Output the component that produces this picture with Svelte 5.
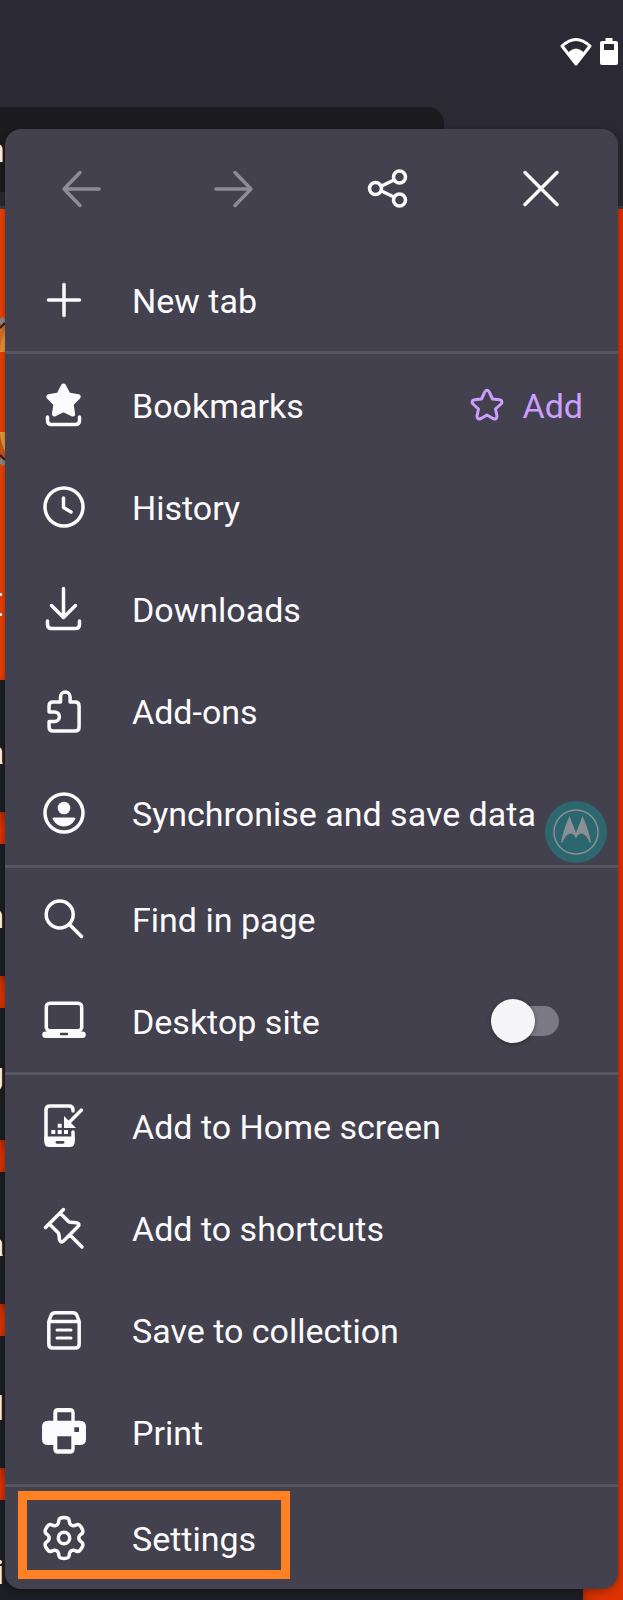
<script lang="ts">
  type Item = { icon: string; label: string; extra?: 'add' | 'switch'; highlight?: boolean };

  const sections: Item[][] = [
    [{ icon: 'plus', label: 'New tab' }],
    [
      { icon: 'bookmarks', label: 'Bookmarks', extra: 'add' },
      { icon: 'history', label: 'History' },
      { icon: 'downloads', label: 'Downloads' },
      { icon: 'addons', label: 'Add-ons' },
      { icon: 'account', label: 'Synchronise and save data' }
    ],
    [
      { icon: 'find', label: 'Find in page' },
      { icon: 'desktop', label: 'Desktop site', extra: 'switch' }
    ],
    [
      { icon: 'home', label: 'Add to Home screen' },
      { icon: 'pin', label: 'Add to shortcuts' },
      { icon: 'collection', label: 'Save to collection' },
      { icon: 'print', label: 'Print' }
    ],
    [{ icon: 'settings', label: 'Settings', highlight: true }]
  ];

  // what is left of the page's list behind the menu
  const cards = ['a', 'n', 'U', 'a', 'l', 'ri'];

  let desktopSite = $state(false);

  // closed curve through the midpoints of the given points
  function smooth(points: number[][]) {
    const mid = (a: number[], b: number[]) =>
      `${((a[0] + b[0]) / 2).toFixed(1)} ${((a[1] + b[1]) / 2).toFixed(1)}`;
    let d = `M${mid(points[points.length - 1], points[0])}`;
    points.forEach((p, i) => {
      const next = points[(i + 1) % points.length];
      d += `Q${p[0].toFixed(1)} ${p[1].toFixed(1)} ${mid(p, next)}`;
    });
    return d + 'z';
  }

  function gear(cx: number, cy: number) {
    const points: number[][] = [];
    for (let i = 0; i < 6; i++) {
      for (const [deg, r] of [[-21, 15], [-14, 21], [14, 21], [21, 15]]) {
        const a = ((i * 60 + deg - 90) * Math.PI) / 180;
        points.push([cx + r * Math.cos(a), cy + r * Math.sin(a)]);
      }
    }
    return smooth(points);
  }

  function star(cx: number, cy: number, outer: number, inner: number) {
    let d = '';
    for (let i = 0; i < 10; i++) {
      const r = i % 2 ? inner : outer;
      const a = ((i * 36 - 90) * Math.PI) / 180;
      d += `${i ? 'L' : 'M'}${(cx + r * Math.cos(a)).toFixed(1)} ${(cy + r * Math.sin(a)).toFixed(1)}`;
    }
    return d + 'z';
  }
</script>

{#snippet glyph(name: string)}
  <svg class="icon" viewBox="0 0 52 52" aria-hidden="true">
    {#if name === 'plus'}
      <path d="M26 10.500v31M10.500 26h31" />
    {:else if name === 'bookmarks'}
      <path d={star(25.5, 22.5, 15.5, 8)} class="solid" stroke-width="5" />
      <path d="M9.500 38v3.500q0 4 4 4h24q4 0 4-4v-3.500" />
    {:else if name === 'history'}
      <circle cx="26" cy="26" r="19" />
      <path d="M25.500 17v9.500l7.500 4.500" />
    {:else if name === 'downloads'}
      <path d="M25.500 5.500v29M13.500 22.500l12 12 12-12" />
      <path d="M9.500 38v3.500q0 4 4 4h24q4 0 4-4v-3.500" />
    {:else if name === 'addons'}
      <path d="M11 21q0-4 4-4h7.500v-5a4.800 5 0 0 1 9.600 0v5h5q4 0 4 4v21q0 4-4 4h-22q-4 0-4-4v-5.500h5.500a4.800 4.800 0 0 0 0-9.600h-5.500z" />
    {:else if name === 'account'}
      <circle cx="26" cy="26" r="19" />
      <circle cx="26" cy="21" r="6.300" class="fill" />
      <path d="M16.500 30.500h19q3 0 1.500 2.300-4 6.700-11 6.700t-11-6.700q-1.500-2.300 1.500-2.300z" class="fill" />
    {:else if name === 'find'}
      <circle cx="21.700" cy="21.500" r="13.500" />
      <path d="M31.500 31.500l12 12" />
    {:else if name === 'desktop'}
      <rect x="8.300" y="8.300" width="35.400" height="27.400" rx="3.500" />
      <path d="M7.500 36.500h37a3.200 3.200 0 0 1 0 6.500h-37a3.200 3.200 0 0 1 0-6.500z" class="fill" />
      <path d="M23 39h6" class="cut" stroke-width="2.500" />
    {:else if name === 'home'}
      <path d="M35 11v-1q0-4-4-4h-19q-4 0-4 4v30h27v-8" />
      <path d="M6.300 36.500h30.400v5.500q0 5-5 5h-20.400q-5 0-5-5z" class="fill" />
      <path d="M19 42.300h6" class="cut" stroke-width="2.800" />
      <path d="M19.700 23.700h4v4h-4zM13.300 30h4v4h-4zM19.700 30h4v4h-4zM26 30h4v4h-4z" class="fill" />
      <path d="M43.500 10l-13 13" />
      <path d="M26 16v12h12z" class="fill" />
    {:else if name === 'pin'}
      <path d="M25.500 7.500l-18 18M22.500 11.500l8 8q.8.800 2 .800l6 .4q4 .8 1.500 3.800l-14.500 14.500q-3 2.500-4-1.500l-.6-5q-.2-1.200-1-2l-8-8M32.500 33.500l11.500 11.500" />
    {:else if name === 'collection'}
      <path d="M10.800 17.500l2-5.500q1-3.200 4.500-3.200h17.400q3.500 0 4.500 3.200l2 5.500v22.500q0 4-4 4h-22.400q-4 0-4-4zM11 17.500h30" />
      <path d="M19 26h14M19 34h14" stroke-width="3" />
    {:else if name === 'print'}
      <path fill-rule="evenodd" class="fill" d="M20 2h12q4.700 0 4.700 4.700v8h5.300q6 0 6 6v12.300q0 6-6 6h-5.300v4q0 4.700-4.700 4.700h-12q-4.700 0-4.700-4.700v-4h-5.300q-6 0-6-6v-12.300q0-6 6-6h5.300v-8q0-4.700 4.700-4.700zM19.300 6.300v8.500h14v-8.500zM19.300 30.300v13h14v-13zM36.300 21.300v4.700h4.700v-4.700z" />
    {:else if name === 'settings'}
      <path d={gear(26, 26)} />
      <circle cx="26" cy="26" r="5.700" />
    {:else if name === 'back'}
      <path d="M24 9.500l-16 16.500 16 16.500M8 26h35" />
    {:else if name === 'forward'}
      <path d="M26 9.500l16 16.500-16 16.500M42 26h-35" />
    {:else if name === 'share'}
      <circle cx="13.500" cy="25.500" r="6" />
      <circle cx="37.500" cy="14" r="6" />
      <circle cx="37.500" cy="37" r="6" />
      <path d="M19.500 23l12.500-6M19.500 28l12.500 6" />
    {:else if name === 'close'}
      <path d="M10 9.500l32 32M42 9.500l-32 32" />
    {/if}
  </svg>
{/snippet}

<div class="screen">
  <div class="page" aria-hidden="true">
    <div class="browser-bar">
      <div class="url">n</div>
    </div>
    <div class="hero">
      <svg class="emblem" viewBox="0 0 5 152">
        <path d="M0 10q3-1 5-6v32h-5z" fill="#d8702a" />
        <path d="M5 14v22h-5q1-12 5-22z" fill="#ec9a30" />
        <path d="M0 116h5v28q-2-5-5-8z" fill="#c9581f" />
        <path d="M0 116h5v20q-4-8-5-20z" fill="#efa033" />
        <path d="M0 7l5-4M0 144l5 4" stroke="#8e8c8b" stroke-width="6" />
        <path d="M0 12l5-5M0 139l5 5" stroke="#25221f" stroke-width="2" />
      </svg>
      <span class="dash"></span>
      <span class="dash"></span>
    </div>
    {#each cards as card}
      <div class="card"><span>{card}</span></div>
    {/each}
  </div>

  <div class="status">
    <svg width="34" height="30" viewBox="0 0 34 30">
      <path d="M3 9q14-13 28 0l-14 18z" fill="none" stroke="#fff" stroke-width="3" stroke-linejoin="round" />
      <path d="M9.500 15q7.500-7 15 0l-7.500 12z" fill="#fff" />
    </svg>
    <svg width="18" height="28" viewBox="0 0 18 28">
      <path fill-rule="evenodd" fill="#fff" d="M5.500 0h7v3h3.500q2 0 2 2v20q0 2-2 2h-14q-2 0-2-2v-20q0-2 2-2h3.500zM4 6v6h10v-6z" />
    </svg>
  </div>

  <nav class="menu">
    <div class="toolbar">
      <button type="button" aria-label="Back" disabled>{@render glyph('back')}</button>
      <button type="button" aria-label="Forward" disabled>{@render glyph('forward')}</button>
      <button type="button" aria-label="Share">{@render glyph('share')}</button>
      <button type="button" aria-label="Close">{@render glyph('close')}</button>
    </div>

    {#each sections as items}
      <div class="section" class:long={items.length > 3}>
        {#each items as item}
          <div class="row" class:highlight={item.highlight}>
            {#if item.extra === 'switch'}
              <label class="item" for="desktop-site">
                {@render glyph(item.icon)}
                <span class="text">{item.label}</span>
              </label>
              <input id="desktop-site" class="switch" type="checkbox" role="switch" bind:checked={desktopSite} />
            {:else}
              <button type="button" class="item">
                {@render glyph(item.icon)}
                <span class="text">{item.label}</span>
              </button>
              {#if item.extra === 'add'}
                <button type="button" class="add">
                  <svg width="34" height="34" viewBox="0 0 34 34" aria-hidden="true">
                    <path d="M14.500 4.500q2.500-4.500 5 0l3 6.500 7 .8q4 1.200 1.500 4.200l-5.500 5 1.500 7q0 4-4 2.500l-6-3.500-6 3.500q-4 1.500-4-2.500l1.500-7-5.500-5q-2.500-3 1.500-4.200l7-.8z" />
                  </svg>
                  <span class="text">Add</span>
                </button>
              {/if}
            {/if}
          </div>
        {/each}
      </div>
    {/each}
  </nav>

  <svg class="moto" viewBox="0 0 62 62" aria-hidden="true">
    <circle cx="31" cy="31" r="31" fill="#2b676c" />
    <circle cx="31" cy="31" r="22" fill="none" stroke="#8b8e96" stroke-width="1.500" />
    <path d="M24.500 15l6.500 17 6.500-17q6 13 8.500 26.500h-1.500q-3-8-7.500-9-4 0-6 5-2-5-6-5-4.500 1-7.500 9h-1.500q2.500-13.500 8.500-26.500z" fill="#8b8e96" />
  </svg>
</div>

<style>
  :global(body) {
    margin: 0;
    background: #1b1e24;
  }

  .screen {
    position: relative;
    box-sizing: border-box;
    padding: 129px 5px 11px;
    overflow: hidden;
    font-family: Roboto, sans-serif;
    font-size: 34px;
    line-height: 40px;
    color: #fbfbfe;
  }

  /* page behind the menu */
  .page {
    position: absolute;
    inset: 0;
    overflow: hidden;
    background: #dd3300;
  }

  .browser-bar {
    box-sizing: border-box;
    height: 209px;
    padding-top: 107px;
    background: #2b2933;
    border-bottom: 3px solid #403e4a;
  }

  .url {
    display: flex;
    align-items: center;
    width: 444px;
    height: 85px;
    border-radius: 0 16px 16px 0;
    background: #1c1b1f;
    text-indent: -14px;
  }

  .hero {
    display: flex;
    flex-direction: column;
    gap: 17px;
    height: 471px;
    padding-top: 107px;
    box-sizing: border-box;
    background: linear-gradient(90deg, #f13f00, #dd3300);
  }

  .emblem {
    width: 5px;
    height: 152px;
    margin-bottom: 108px;
  }

  .dash {
    width: 2px;
    height: 3px;
    background: #fff;
  }

  .card {
    display: flex;
    align-items: center;
    box-sizing: border-box;
    width: 583px;
    height: 132px;
    margin-bottom: 32px;
    padding-top: 12px;
    background: #1b1e24;
    box-shadow: 0 4px 12px rgba(0, 0, 0, 0.4);
  }

  .card span {
    display: flex;
    justify-content: flex-end;
    width: 4px;
    font-weight: 500;
  }

  .status {
    position: absolute;
    top: 37px;
    right: 5px;
    display: flex;
    align-items: center;
    gap: 7px;
  }

  .menu {
    position: relative;
    border-radius: 16px;
    background: #43414d;
    box-shadow: 0 2px 8px rgba(0, 0, 0, 0.35);
  }

  .toolbar {
    display: flex;
    height: 120px;
  }

  button {
    padding: 0;
    border: none;
    background: none;
    color: inherit;
    font: inherit;
    cursor: pointer;
  }

  .toolbar button {
    display: flex;
    flex: 1;
    align-items: center;
    justify-content: center;
  }

  .toolbar button:disabled {
    color: #8d8b95;
  }

  .icon {
    flex: none;
    width: 52px;
    height: 52px;
    fill: none;
    stroke: currentColor;
    stroke-width: 3.5;
    stroke-linecap: round;
    stroke-linejoin: round;
  }

  .icon .fill {
    fill: currentColor;
    stroke: none;
  }

  .icon .solid {
    fill: currentColor;
  }

  .icon .cut {
    stroke: #43414d;
  }

  .section + .section {
    border-top: 3px solid #575560;
  }

  .section.long {
    padding-bottom: 1px;
  }

  .row {
    position: relative;
    display: flex;
    align-items: center;
    height: 102px;
  }

  .item {
    display: flex;
    flex: 1;
    align-items: center;
    gap: 42px;
    height: 100%;
    padding-left: 33px;
    text-align: left;
    white-space: nowrap;
    cursor: pointer;
  }

  .text {
    padding-top: 2px;
  }

  .add {
    display: flex;
    align-items: center;
    gap: 18px;
    margin-right: 35px;
    color: #cb9eff;
  }

  .add svg {
    fill: none;
    stroke: currentColor;
    stroke-width: 3;
    stroke-linejoin: round;
  }

  .switch {
    position: relative;
    appearance: none;
    width: 68px;
    height: 30px;
    margin: 0 59px 0 0;
    border-radius: 15px;
    background: #7b7983;
    cursor: pointer;
  }

  .switch::before {
    content: '';
    position: absolute;
    top: -7px;
    left: 0;
    width: 44px;
    height: 44px;
    border-radius: 50%;
    background: #f5f5f8;
    box-shadow: 0 1px 4px rgba(0, 0, 0, 0.4);
  }

  .switch:checked::before {
    left: auto;
    right: 0;
  }

  .highlight::after {
    content: '';
    position: absolute;
    top: 4px;
    left: 13px;
    box-sizing: border-box;
    width: 272px;
    height: 88px;
    border: 9px solid #ff8124;
    pointer-events: none;
  }

  .moto {
    position: absolute;
    top: 801px;
    right: 16px;
    width: 62px;
    height: 62px;
  }
</style>
